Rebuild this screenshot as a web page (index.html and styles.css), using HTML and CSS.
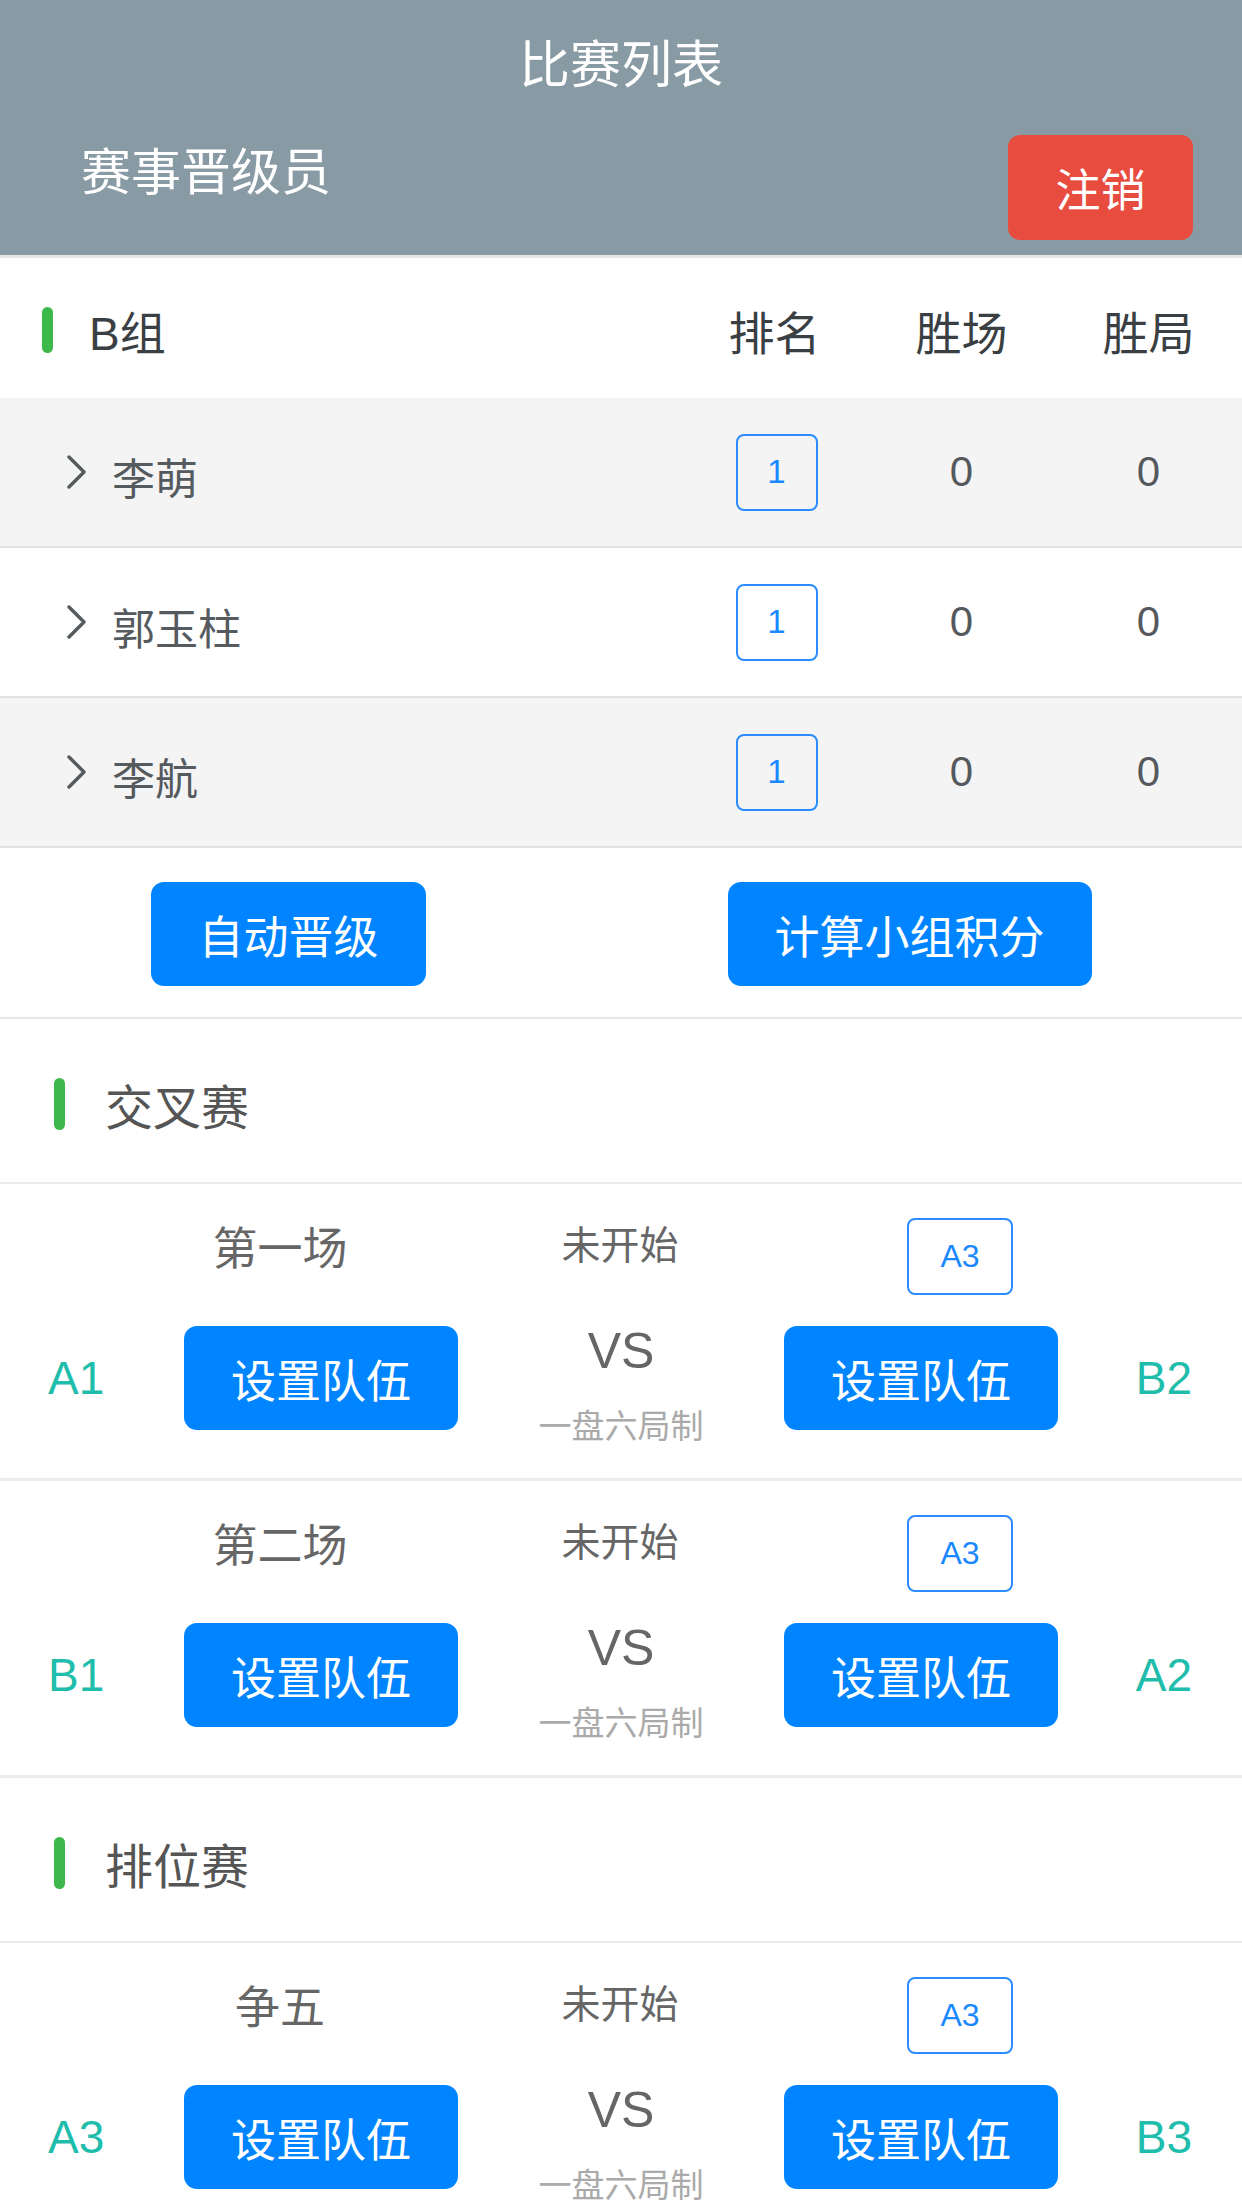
FILE: index.html
```html
<!DOCTYPE html>
<html lang="zh-CN">
<head>
<meta charset="utf-8">
<title>比赛列表</title>
<link rel="stylesheet" href="styles.css">
</head>
<body>
<div class="header">
  <div class="title">比赛列表</div>
  <div class="header-row">
    <div class="role">赛事晋级员</div>
    <div class="logout">注销</div>
  </div>
</div>

<div class="group-head">
  <span class="bar bar-sm"></span>
  <span class="group-name">B组</span>
  <span class="col head">排名</span>
  <span class="col head">胜场</span>
  <span class="col head">胜局</span>
</div>

<div class="row alt">
  <svg class="chev" viewBox="0 0 22 34" width="22" height="34"><polyline points="4,2 19,17 4,32" fill="none" stroke="#555a5e" stroke-width="3.4" stroke-linecap="round" stroke-linejoin="round"/></svg>
  <span class="name">李萌</span>
  <span class="col"><span class="rank">1</span></span>
  <span class="col num">0</span>
  <span class="col num">0</span>
</div>
<div class="row">
  <svg class="chev" viewBox="0 0 22 34" width="22" height="34"><polyline points="4,2 19,17 4,32" fill="none" stroke="#555a5e" stroke-width="3.4" stroke-linecap="round" stroke-linejoin="round"/></svg>
  <span class="name">郭玉柱</span>
  <span class="col"><span class="rank">1</span></span>
  <span class="col num">0</span>
  <span class="col num">0</span>
</div>
<div class="row alt">
  <svg class="chev" viewBox="0 0 22 34" width="22" height="34"><polyline points="4,2 19,17 4,32" fill="none" stroke="#555a5e" stroke-width="3.4" stroke-linecap="round" stroke-linejoin="round"/></svg>
  <span class="name">李航</span>
  <span class="col"><span class="rank">1</span></span>
  <span class="col num">0</span>
  <span class="col num">0</span>
</div>

<div class="actions">
  <div class="half"><div class="btn btn-auto">自动晋级</div></div>
  <div class="half"><div class="btn btn-calc">计算小组积分</div></div>
</div>

<div class="section">
  <span class="bar bar-lg"></span>
  <span class="section-name">交叉赛</span>
</div>

<div class="match">
  <div class="match-top">
    <span class="label">第一场</span>
    <span class="status">未开始</span>
    <span class="cell"><span class="seed">A3</span></span>
  </div>
  <div class="match-main">
    <span class="team left">A1</span>
    <div class="btn btn-team">设置队伍</div>
    <div class="mid"><div class="vs">VS</div><div class="rule">一盘六局制</div></div>
    <div class="btn btn-team">设置队伍</div>
    <span class="team right">B2</span>
  </div>
</div>

<div class="match">
  <div class="match-top">
    <span class="label">第二场</span>
    <span class="status">未开始</span>
    <span class="cell"><span class="seed">A3</span></span>
  </div>
  <div class="match-main">
    <span class="team left">B1</span>
    <div class="btn btn-team">设置队伍</div>
    <div class="mid"><div class="vs">VS</div><div class="rule">一盘六局制</div></div>
    <div class="btn btn-team">设置队伍</div>
    <span class="team right">A2</span>
  </div>
</div>

<div class="section">
  <span class="bar bar-lg"></span>
  <span class="section-name">排位赛</span>
</div>

<div class="match">
  <div class="match-top">
    <span class="label">争五</span>
    <span class="status">未开始</span>
    <span class="cell"><span class="seed">A3</span></span>
  </div>
  <div class="match-main">
    <span class="team left">A3</span>
    <div class="btn btn-team">设置队伍</div>
    <div class="mid"><div class="vs">VS</div><div class="rule">一盘六局制</div></div>
    <div class="btn btn-team">设置队伍</div>
    <span class="team right">B3</span>
  </div>
</div>
</body>
</html>
```

FILE: styles.css
```css
* { box-sizing: border-box; }
html, body { margin: 0; padding: 0; }
body {
  width: 1242px;
  background: #ffffff;
  font-family: "Liberation Sans", "Noto Sans CJK SC", sans-serif;
  color: #555a5e;
  overflow: hidden;
}

/* header */
.header {
  height: 258px;
  background: #889aa3;
  border-bottom: 3px solid #e6e6e6;
}
.title {
  height: 132px;
  line-height: 132px;
  text-align: center;
  font-size: 51px;
  color: #ffffff;
}
.header-row {
  display: flex;
  justify-content: space-between;
  align-items: flex-start;
  padding: 0 49px 0 81px;
}
.role {
  line-height: 82px;
  font-size: 50px;
  color: #ffffff;
}
.logout {
  margin-top: 3px;
  width: 185px;
  height: 105px;
  border-radius: 12px;
  background: #e74c3f;
  color: #ffffff;
  font-size: 45px;
  display: flex;
  align-items: center;
  justify-content: center;
}

/* group table */
.group-head {
  height: 140px;
  padding-top: 4px;
  display: flex;
  align-items: center;
  color: #3a3f43;
}
.bar {
  display: block;
  background: #3cb94a;
  border-radius: 6px;
  flex: none;
}
.bar-sm { width: 11px; height: 46px; margin-left: 42px; }
.bar-lg { width: 11px; height: 52px; margin-left: 54px; }
.group-name {
  flex: 1;
  margin-left: 36px;
  font-size: 46px;
}
.col {
  width: 187px;
  flex: none;
  text-align: center;
  display: flex;
  justify-content: center;
  align-items: center;
}
.head { font-size: 46px; color: #3a3f43; }

.row {
  height: 150px;
  display: flex;
  align-items: center;
  background: #ffffff;
  border-bottom: 2px solid #e2e2e2;
}
.row.alt { background: #f4f4f4; }
.chev { margin-left: 65px; flex: none; display: block; }
.name {
  flex: 1;
  margin-left: 25px;
  margin-top: 8px;
  font-size: 43px;
  color: #555a5e;
}
.rank {
  width: 82px;
  height: 77px;
  margin-left: 4px;
  border: 2px solid #2b8cff;
  border-radius: 8px;
  display: flex;
  align-items: center;
  justify-content: center;
  font-size: 33px;
  color: #1a88ff;
}
.num { font-size: 42px; color: #55595d; }

/* action buttons */
.actions {
  display: flex;
  padding: 34px 0 31px;
  border-bottom: 2px solid #e6e6e6;
}
.half {
  width: 621px;
  display: flex;
  justify-content: center;
  padding-right: 44px;
}
.btn {
  height: 104px;
  border-radius: 13px;
  background: #0084ff;
  color: #ffffff;
  font-size: 45px;
  display: flex;
  align-items: center;
  justify-content: center;
}
.btn-auto { width: 275px; }
.btn-calc { width: 364px; }

/* sections */
.section {
  height: 165px;
  padding-top: 6px;
  display: flex;
  align-items: center;
  border-bottom: 2px solid #ebebeb;
}
.section-name {
  margin-left: 40px;
  font-size: 48px;
  color: #555555;
}

/* matches */
.match {
  height: 297px;
  padding-top: 34px;
  border-bottom: 3px solid #ececec;
}
.match-top {
  display: grid;
  grid-template-columns: 340px 340px 340px;
  grid-template-rows: 77px;
  padding-left: 110px;
}
.label {
  justify-self: center;
  align-self: start;
  line-height: 64px;
  font-size: 45px;
  color: #666666;
}
.status {
  justify-self: center;
  align-self: start;
  line-height: 56px;
  font-size: 39px;
  color: #666666;
}
.cell { display: flex; justify-content: center; }
.seed {
  width: 106px;
  height: 77px;
  border: 2px solid #2b8cff;
  border-radius: 8px;
  display: flex;
  align-items: center;
  justify-content: center;
  font-size: 32px;
  color: #1a88ff;
}
.match-main {
  margin-top: 31px;
  display: grid;
  grid-template-columns: 1fr 274px 326px 274px 1fr;
  grid-template-rows: 104px;
  padding: 0 50px;
  align-items: center;
}
.team {
  font-size: 46px;
  color: #1fbdac;
}
.team.left { justify-self: start; margin-left: -2px; }
.team.right { justify-self: end; }
.mid {
  align-self: start;
  text-align: center;
}
.vs {
  line-height: 50px;
  font-size: 50px;
  color: #666666;
}
.rule {
  margin-top: 34px;
  line-height: 33px;
  font-size: 33px;
  color: #aaaaaa;
}
```
